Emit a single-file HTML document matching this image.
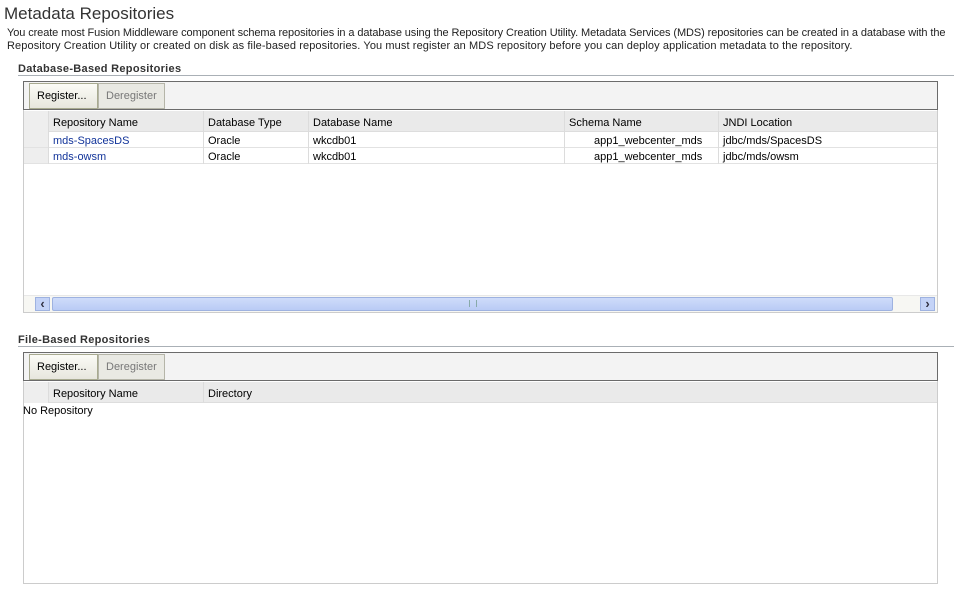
<html><head><style>
body{margin:0;width:954px;height:590px;background:#fff;font-family:"Liberation Sans",Arial,sans-serif;font-size:11px;color:#000;position:relative;overflow:hidden}
div,span{position:absolute;box-sizing:border-box}
.t{white-space:nowrap}
.h{font-weight:bold;color:#333;font-size:11px;letter-spacing:0.3px}
.line{height:1px;background:#aab0b6}
.tb{border:1px solid #6b6b6b;background:#f3f3f3}
.btn{height:26px;top:1px;border:1px solid #b5b5a8;padding:6px 0 0 7px}
.hdr{background:#eaeaea;border-bottom:1px solid #ddd}
.cd{width:1px;background:#dcdcdc}
.rs{background:#eeeeee}
a{color:#12349a;text-decoration:none}
</style></head><body>
<div class="t" style="left:4px;top:4px;font-size:17px;color:#333">Metadata Repositories</div>
<div class="t" style="left:7px;top:27px;line-height:13px;color:#222;letter-spacing:-0.1px">You create most Fusion Middleware component schema repositories in a database using the Repository Creation Utility. Metadata Services (MDS) repositories can be created in a database with the<br><span style="position:static;letter-spacing:0.1px">Repository Creation Utility or created on disk as file-based repositories. You must register an MDS repository before you can deploy application metadata to the repository.</span></div>

<div class="t h" style="left:18px;top:63px">Database-Based Repositories</div>
<div class="line" style="left:18px;top:75px;width:936px"></div>
<div style="left:23px;top:81px;width:915px;height:232px;border:1px solid #ccc;border-top:none"></div>
<div class="tb" style="left:23px;top:81px;width:915px;height:29px">
<div class="btn" style="left:5px;width:69px;background:linear-gradient(#fbfbf6,#e7e6de);border-color:#a8aa90">Register...</div>
<div class="btn" style="left:74px;width:67px;background:#e9e9e3;color:#777">Deregister</div>
</div>
<div class="hdr" style="left:24px;top:111px;width:913px;height:21px"></div>
<div class="rs" style="left:24px;top:111px;width:24px;height:53px"></div>
<div class="t" style="left:53px;top:117px">Repository Name</div>
<div class="t" style="left:208px;top:117px">Database Type</div>
<div class="t" style="left:313px;top:117px">Database Name</div>
<div class="t" style="left:569px;top:117px">Schema Name</div>
<div class="t" style="left:723px;top:117px">JNDI Location</div>
<div class="line" style="left:24px;top:147px;width:913px;background:#e2e2e2"></div>
<div class="line" style="left:24px;top:163px;width:913px;background:#e2e2e2"></div>
<div class="cd" style="left:48px;top:111px;height:53px"></div>
<div class="cd" style="left:203px;top:111px;height:53px"></div>
<div class="cd" style="left:308px;top:111px;height:53px"></div>
<div class="cd" style="left:564px;top:111px;height:53px"></div>
<div class="cd" style="left:718px;top:111px;height:53px"></div>
<div class="t" style="left:53px;top:135px"><a>mds-SpacesDS</a></div>
<div class="t" style="left:208px;top:135px">Oracle</div>
<div class="t" style="left:313px;top:135px">wkcdb01</div>
<div class="t" style="left:594px;top:135px">app1_webcenter_mds</div>
<div class="t" style="left:723px;top:135px">jdbc/mds/SpacesDS</div>
<div class="t" style="left:53px;top:151px"><a>mds-owsm</a></div>
<div class="t" style="left:208px;top:151px">Oracle</div>
<div class="t" style="left:313px;top:151px">wkcdb01</div>
<div class="t" style="left:594px;top:151px">app1_webcenter_mds</div>
<div class="t" style="left:723px;top:151px">jdbc/mds/owsm</div>
<div style="left:24px;top:295px;width:913px;height:1px;background:#e8e8e8"></div>
<div style="left:24px;top:296px;width:913px;height:16px;background:#f7f7f3"></div>
<div style="left:35px;top:297px;width:15px;height:14px;background:#c4d3f7;border:1px solid #9eb2e0;color:#334;font-weight:bold;font-size:13px;line-height:11px;text-align:center">&lsaquo;</div>
<div style="left:52px;top:297px;width:841px;height:14px;background:linear-gradient(#cfdcfa,#b9cbf5);border:1px solid #9eb2e0;border-radius:2px"></div>
<div style="left:469px;top:300px;width:8px;height:7px;border-left:1px solid #8aa;border-right:1px solid #8aa"></div>
<div style="left:920px;top:297px;width:15px;height:14px;background:#c4d3f7;border:1px solid #9eb2e0;color:#334;font-weight:bold;font-size:13px;line-height:11px;text-align:center">&rsaquo;</div>

<div class="t h" style="left:18px;top:334px">File-Based Repositories</div>
<div class="line" style="left:18px;top:346px;width:936px"></div>
<div style="left:23px;top:352px;width:915px;height:232px;border:1px solid #ccc;border-top:none"></div>
<div class="tb" style="left:23px;top:352px;width:915px;height:29px">
<div class="btn" style="left:5px;width:69px;background:linear-gradient(#fbfbf6,#e7e6de);border-color:#a8aa90">Register...</div>
<div class="btn" style="left:74px;width:67px;background:#e9e9e3;color:#777">Deregister</div>
</div>
<div class="hdr" style="left:24px;top:382px;width:913px;height:21px"></div>
<div class="rs" style="left:24px;top:382px;width:24px;height:21px"></div>
<div class="cd" style="left:48px;top:382px;height:21px"></div>
<div class="cd" style="left:203px;top:382px;height:21px"></div>
<div class="t" style="left:53px;top:388px">Repository Name</div>
<div class="t" style="left:208px;top:388px">Directory</div>
<div class="t" style="left:23px;top:405px">No Repository</div>
</body></html>
